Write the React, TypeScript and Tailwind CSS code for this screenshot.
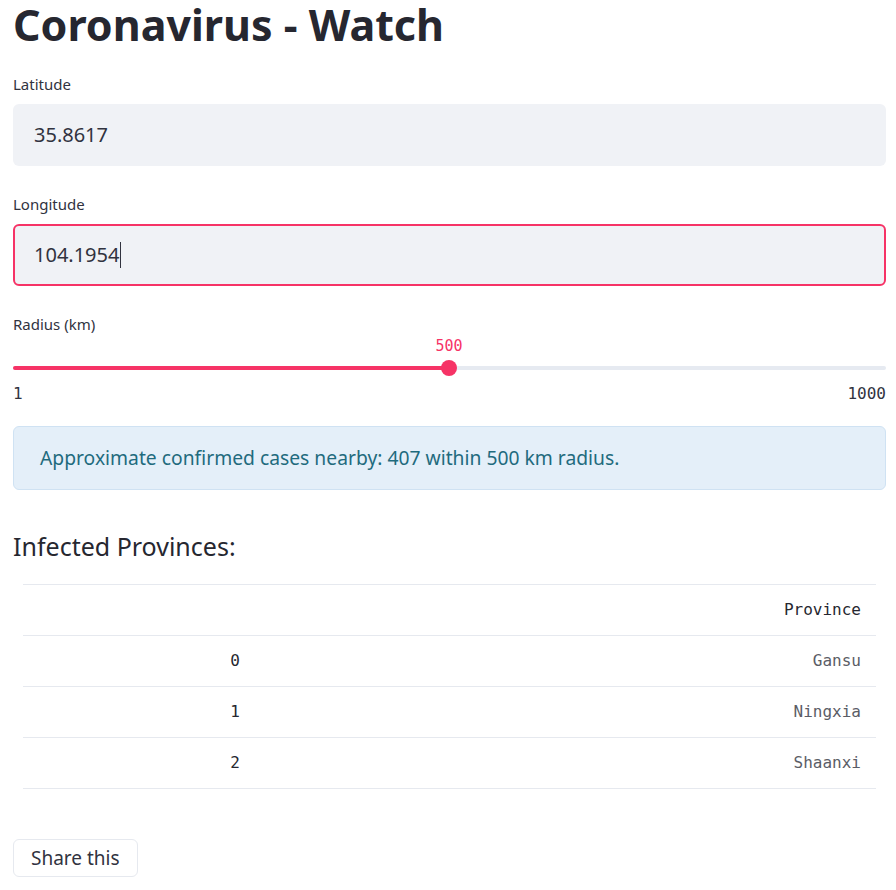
import { useState } from 'react'

const sans = 'font-["Noto_Sans",sans-serif]'
const mono = 'font-["DejaVu_Sans_Mono",monospace]'

const provinces = ['Gansu', 'Ningxia', 'Shaanxi']

function Field({ label, value, focused }: { label: string; value: string; focused?: boolean }) {
  return (
    <div>
      <div className="h-5 text-[15px] leading-5 text-[#31333f]">{label}</div>
      <div
        className={`mt-[10px] flex h-[62px] items-center rounded-md bg-[#f0f2f6] px-[19px] text-[20px] text-[#31333f] border-2 ${
          focused ? 'border-[#f63366]' : 'border-transparent'
        }`}
      >
        <span>{value}</span>
        {focused && <span className="ml-px h-[26px] w-px bg-[#31333f]" />}
      </div>
    </div>
  )
}

export default function App() {
  const [radius] = useState(500)
  const pct = ((radius - 1) / 999) * 100

  return (
    <div className={`${sans} min-h-screen bg-white text-[#262730]`}>
      <div className="pl-[13px] pr-[10px]">
        <h1 className="text-[43px] font-bold leading-[50px] text-[#262730]">Coronavirus - Watch</h1>

        <div className="mt-[24px]">
          <Field label="Latitude" value="35.8617" />
        </div>
        <div className="mt-[28px]">
          <Field label="Longitude" value="104.1954" focused />
        </div>

        <div className="mt-[28px]">
          <div className="h-5 text-[15px] leading-5 text-[#31333f]">Radius (km)</div>
          <div className="relative mt-[10px] h-[64px]">
            <div className="absolute top-[22px] h-1 w-full rounded-full bg-[#e6eaf1]" />
            <div className="absolute top-[22px] h-1 rounded-full bg-[#f63366]" style={{ width: `${pct}%` }} />
            <div
              className="absolute top-[16px] h-4 w-4 -translate-x-1/2 rounded-full bg-[#f63366]"
              style={{ left: `${pct}%` }}
            />
            <div
              className={`${mono} absolute top-[-8px] -translate-x-1/2 text-[15px] leading-5 text-[#f63366]`}
              style={{ left: `${pct}%` }}
            >
              {radius}
            </div>
            <div className={`${mono} absolute top-[40px] flex w-full justify-between text-[16px] leading-5 text-[#31333f]`}>
              <span>1</span>
              <span>1000</span>
            </div>
          </div>
        </div>

        <div className="mt-[18px] flex h-[64px] items-center rounded-md border border-[#cfe2f3] bg-[#e4eff9] px-[26px] text-[19.3px] text-[#1f6b7e]">
          Approximate confirmed cases nearby: 407 within 500 km radius.
        </div>

        <h3 className="mt-[40px] text-[25px] leading-8 text-[#262730]">Infected Provinces:</h3>

        <div className="mt-[22px] px-[10px]">
          <table className={`${mono} w-full border-collapse text-[16px]`}>
            <thead>
              <tr className="h-[51px] border-y border-[#e6e9ef]">
                <th className="w-[232px]" />
                <th className="pr-[15px] text-right font-medium text-[#262730]">Province</th>
              </tr>
            </thead>
            <tbody>
              {provinces.map((p, i) => (
                <tr key={p} className="h-[51px] border-b border-[#e6e9ef]">
                  <td className="pr-[15px] text-right font-medium text-[#262730]">{i}</td>
                  <td className="pr-[15px] text-right text-[#5b5d66]">{p}</td>
                </tr>
              ))}
            </tbody>
          </table>
        </div>

        <button className="mt-[50px] mb-4 h-[38px] rounded-md border border-[#e6e9ef] bg-white px-[17px] text-[19px] text-[#31333f]">
          Share this
        </button>
      </div>
    </div>
  )
}
